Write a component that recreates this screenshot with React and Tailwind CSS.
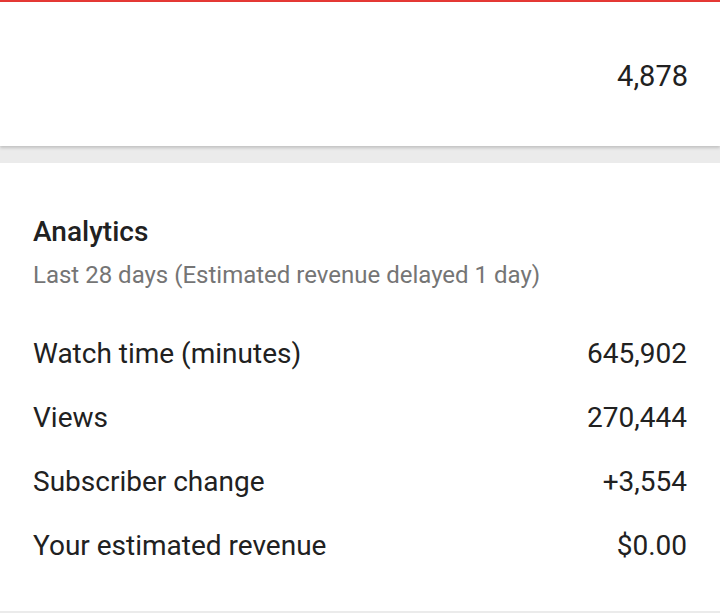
const rows = [
  ['Watch time (minutes)', '645,902'],
  ['Views', '270,444'],
  ['Subscriber change', '+3,554'],
  ['Your estimated revenue', '$0.00'],
]

export default function App() {
  return (
    <div className="w-[720px] h-[613px] overflow-hidden bg-[#ebebeb] font-['Roboto',sans-serif] text-[#212121]">
      <div className="h-[2px] bg-[#e53935]" />
      <div className="h-[144px] bg-white shadow-[0_2px_3px_rgba(0,0,0,0.18)] pt-[56px] pr-[32px] text-right">
        <span className="text-[29px] leading-[36px]">4,878</span>
      </div>
      <div className="h-[17px]" />
      <div className="h-[448px] bg-white px-[33px] pt-[51px]">
        <h2 className="text-[28px] font-medium leading-[36px]">Analytics</h2>
        <p className="text-[24px] text-[#757575] leading-[32px] mt-[9px]">
          Last 28 days (Estimated revenue delayed 1 day)
        </p>
        <div className="mt-[31px] flex flex-col">
          {rows.map(([label, value]) => (
            <div key={label} className="h-[64px] flex justify-between text-[28px] leading-[64px]">
              <span>{label}</span>
              <span>{value}</span>
            </div>
          ))}
        </div>
      </div>
    </div>
  )
}
